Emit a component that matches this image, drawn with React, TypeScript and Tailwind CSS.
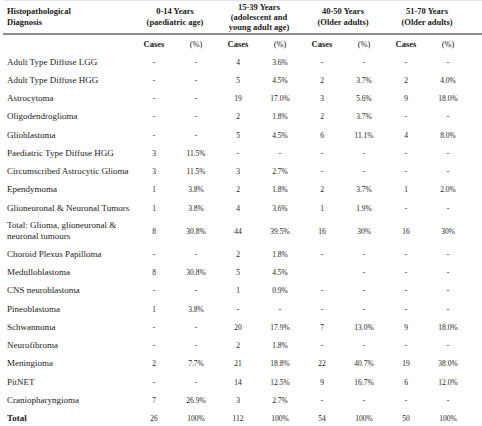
import React from 'react';

type Row = { label: string; v: string[]; tall?: boolean; bold?: boolean };

const rows: Row[] = [
  { label: 'Adult Type Diffuse LGG', v: ['-', '-', '4', '3.6%', '-', '-', '-', '-'] },
  { label: 'Adult Type Diffuse HGG', v: ['-', '-', '5', '4.5%', '2', '3.7%', '2', '4.0%'] },
  { label: 'Astrocytoma', v: ['-', '-', '19', '17.0%', '3', '5.6%', '9', '18.0%'] },
  { label: 'Oligodendroglioma', v: ['-', '-', '2', '1.8%', '2', '3.7%', '-', '-'] },
  { label: 'Glioblastoma', v: ['-', '-', '5', '4.5%', '6', '11.1%', '4', '8.0%'] },
  { label: 'Paediatric Type Diffuse HGG', v: ['3', '11.5%', '-', '-', '-', '-', '-', '-'] },
  { label: 'Circumscribed Astrocytic Glioma', v: ['3', '11.5%', '3', '2.7%', '-', '-', '-', '-'] },
  { label: 'Ependymoma', v: ['1', '3.8%', '2', '1.8%', '2', '3.7%', '1', '2.0%'] },
  { label: 'Glioneuronal & Neuronal Tumors', v: ['1', '3.8%', '4', '3.6%', '1', '1.9%', '-', '-'] },
  { label: 'Total: Glioma, glioneuronal & neuronal tumours', v: ['8', '30.8%', '44', '39.5%', '16', '30%', '16', '30%'], tall: true },
  { label: 'Choroid Plexus Papilloma', v: ['-', '-', '2', '1.8%', '-', '-', '-', '-'] },
  { label: 'Medulloblastoma', v: ['8', '30.8%', '5', '4.5%', '', '-', '-', '-'] },
  { label: 'CNS neuroblastoma', v: ['-', '-', '1', '0.9%', '-', '-', '-', '-'] },
  { label: 'Pineoblastoma', v: ['1', '3.8%', '-', '-', '-', '-', '-', '-'] },
  { label: 'Schwannoma', v: ['-', '-', '20', '17.9%', '7', '13.0%', '9', '18.0%'] },
  { label: 'Neurofibroma', v: ['-', '-', '2', '1.8%', '-', '-', '-', '-'] },
  { label: 'Meningioma', v: ['2', '7.7%', '21', '18.8%', '22', '40.7%', '19', '38.0%'] },
  { label: 'PitNET', v: ['-', '-', '14', '12.5%', '9', '16.7%', '6', '12.0%'] },
  { label: 'Craniopharyngioma', v: ['7', '26.9%', '3', '2.7%', '-', '-', '-', '-'] },
  { label: 'Total', v: ['26', '100%', '112', '100%', '54', '100%', '50', '100%'], bold: true },
];

const groups = [
  ['0-14 Years', '(paediatric age)'],
  ['15-39 Years', '(adolescent and', 'young adult age)'],
  ['40-50 Years', '(Older adults)'],
  ['51-70 Years', '(Older adults)'],
];

const cols = 'grid grid-cols-[130px_repeat(8,42px)]';

export default function App() {
  return (
    <div className="w-[482px] h-[426px] bg-white overflow-hidden text-[#222]" style={{ fontFamily: '"Liberation Serif", serif' }}>
      <div className="ml-[3px] w-[479px] border-t border-[#e4e4e4]">
        {/* Header */}
        <div className={`${cols} h-[34px] border-b-2 border-[#8a8a8a] items-center font-bold text-[8.5px] leading-[11px]`}>
          <div className="pl-[4px]">
            <div>Histopathological</div>
            <div>Diagnosis</div>
          </div>
          {groups.map((g, i) => (
            <div key={i} className={`col-span-2 text-center ${g.length > 2 ? 'leading-[10px]' : ''}`}>
              {g.map((t) => (
                <div key={t}>{t}</div>
              ))}
            </div>
          ))}
        </div>

        {/* Sub header */}
        <div className={`${cols} h-[18px] items-center font-bold text-[8.5px]`}>
          <div />
          {[0, 1, 2, 3].map((i) => (
            <React.Fragment key={i}>
              <div className="text-center">Cases</div>
              <div className="text-center font-normal">(%)</div>
            </React.Fragment>
          ))}
        </div>

        {/* Body */}
        {rows.map((r) => (
          <div key={r.label} className={`${cols} items-center ${r.tall ? 'h-[28px]' : 'h-[18.25px]'}`}>
            <div className={`pl-[4px] text-[9px] leading-[11px] ${r.bold ? 'font-bold text-[8.5px]' : ''}`}>
              {r.label}
            </div>
            {r.v.map((x, i) => (
              <div key={i} className="text-center text-[7.5px]">
                {x}
              </div>
            ))}
          </div>
        ))}
      </div>
    </div>
  );
}
